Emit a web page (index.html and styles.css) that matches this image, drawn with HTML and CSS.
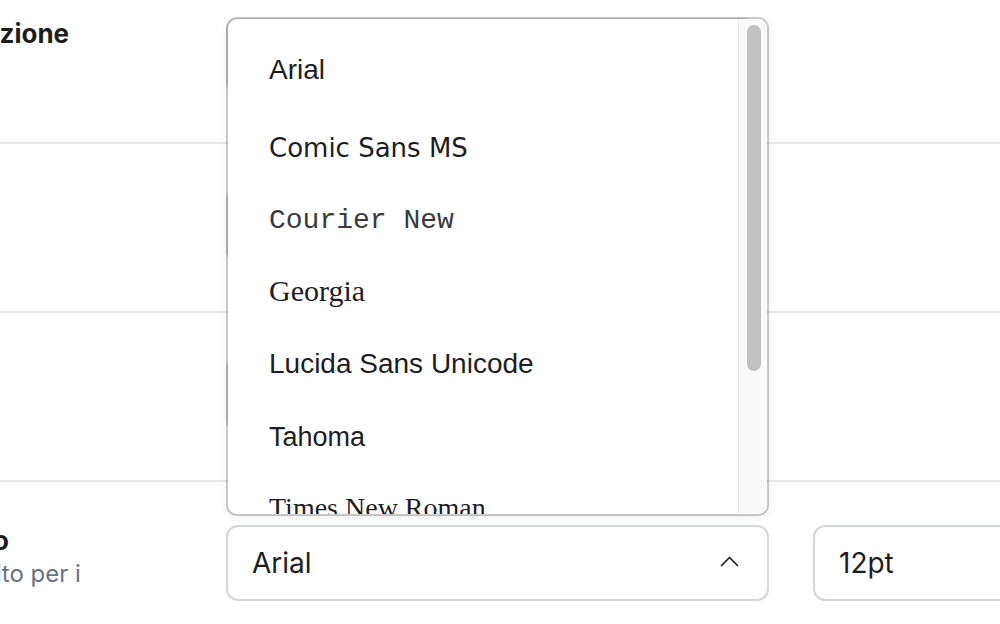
FILE: index.html
```html
<!DOCTYPE html>
<html lang="it">
<head>
<meta charset="utf-8">
<title>Impostazioni documento</title>
<link rel="stylesheet" href="styles.css">
</head>
<body>
<main class="settings">
  <section class="row">
    <div class="label">
      <h3 class="label-title">Impaginazione</h3>
    </div>
    <div class="controls">
      <div class="field plain"></div>
    </div>
  </section>

  <section class="row">
    <div class="label">
      <h3 class="label-title">Margini</h3>
    </div>
    <div class="controls">
      <div class="field plain"></div>
    </div>
  </section>

  <section class="row">
    <div class="label">
      <h3 class="label-title">Lingua</h3>
    </div>
    <div class="controls">
      <div class="field plain"></div>
    </div>
  </section>

  <section class="row">
    <div class="label">
      <h3 class="label-title">Font testo</h3>
      <p class="hint">Font definito per i testi</p>
    </div>
    <div class="controls">
      <div class="picker">
        <div class="field select">
          <span>Arial</span>
          <svg class="chevron" width="19" height="11" viewBox="0 0 19 11" aria-hidden="true">
            <polyline points="1.5,9.5 9.5,1.5 17.5,9.5" fill="none" stroke="#1d1d1f" stroke-width="1.7" stroke-linecap="round" stroke-linejoin="round"/>
          </svg>
        </div>
        <div class="menu">
          <ul class="menu-list">
            <li class="f-arial">Arial</li>
            <li class="f-comic">Comic Sans MS</li>
            <li class="f-courier">Courier New</li>
            <li class="f-georgia">Georgia</li>
            <li class="f-lucida">Lucida Sans Unicode</li>
            <li class="f-tahoma">Tahoma</li>
            <li class="f-times">Times New Roman</li>
            <li class="f-trebuchet">Trebuchet MS</li>
            <li class="f-verdana">Verdana</li>
          </ul>
          <div class="scrollbar">
            <div class="scrollbar-thumb"></div>
          </div>
        </div>
      </div>
      <div class="field size">12pt</div>
    </div>
  </section>
</main>
</body>
</html>
```

FILE: styles.css
```css
* {
  box-sizing: border-box;
}

html,
body {
  margin: 0;
  height: 100%;
  overflow: hidden;
  background: #ffffff;
}

body {
  font-family: Inter, "Noto Sans", sans-serif;
  color: #1d1d1f;
}

/* the settings list is scrolled a little up and to the right */
.settings {
  margin: -25px 0 0 -118px;
}

.row {
  display: grid;
  grid-template-columns: 300px auto;
  column-gap: 44px;
  padding: 43px 0 48px;
  border-bottom: 2px solid #e6e8eb;
}

.label-title {
  margin: 0;
  font-size: 26px;
  font-weight: 700;
  line-height: 32px;
  white-space: nowrap;
  color: #1d1d1f;
}

.hint {
  margin: 0;
  max-width: 240px;
  font-size: 24px;
  line-height: 34px;
  color: #6b7280;
}

.controls {
  display: flex;
  align-items: flex-start;
  gap: 44px;
}

.field {
  flex: none;
  display: flex;
  align-items: center;
  width: 543px;
  height: 76px;
  padding: 0 24px;
  border: 2px solid #d3d6db;
  border-radius: 12px;
  background: #ffffff;
  font-size: 28px;
  color: #1d1d1f;
}

.field.plain {
  width: 530px;
}

.field.size {
  width: 300px;
}

.picker {
  position: relative;
  flex: none;
}

.select {
  justify-content: space-between;
  padding-right: 28px;
}

.chevron {
  display: block;
  margin-top: -3px;
}

/* open font list, floating above the select */
.menu {
  position: absolute;
  left: 0;
  right: 0;
  bottom: calc(100% + 9px);
  display: flex;
  height: 499px;
  border: 2px solid rgba(60, 60, 67, 0.28);
  border-radius: 11px;
  background: #ffffff;
  background-clip: padding-box;
  box-shadow: 0 3px 10px rgba(0, 0, 0, 0.05);
  overflow: hidden;
}

.menu-list {
  flex: 1;
  min-width: 0;
  margin: 0;
  padding: 14px 0;
  list-style: none;
  overflow: hidden;
}

.scrollbar {
  flex: none;
  width: 29px;
  padding: 6px 6px 0 8px;
  background: #fafafa;
  border-left: 1px solid #e7e7e7;
}

.scrollbar-thumb {
  width: 14px;
  height: 346px;
  border-radius: 8px;
  background: #c1c1c1;
}

.menu-list li {
  display: flex;
  align-items: center;
  height: 73px;
  padding-left: 41px;
  font-size: 28px;
  color: #1d1d1f;
  white-space: nowrap;
}

.f-arial,
.f-lucida {
  font-family: Arial, "Liberation Sans", sans-serif;
}

.menu-list .f-lucida {
  padding-top: 4px;
}

.menu-list .f-comic {
  padding-top: 10px;
  font-family: "Comic Sans MS", "DejaVu Sans", sans-serif;
  font-size: 26px;
}

.menu-list .f-courier {
  padding-top: 10px;
  font-family: "Courier New", "Liberation Mono", monospace;
  color: #3a3a3c;
}

.menu-list .f-georgia {
  padding-top: 4px;
  font-family: Georgia, "Liberation Serif", serif;
  font-size: 30px;
}

.menu-list .f-tahoma {
  padding-top: 6px;
  font-family: Tahoma, "Liberation Sans", sans-serif;
  font-size: 27px;
}

.f-times {
  font-family: "Times New Roman", "Liberation Serif", serif;
}

.f-trebuchet {
  font-family: "Trebuchet MS", "Liberation Sans", sans-serif;
}

.f-verdana {
  font-family: Verdana, "DejaVu Sans", sans-serif;
}
```
